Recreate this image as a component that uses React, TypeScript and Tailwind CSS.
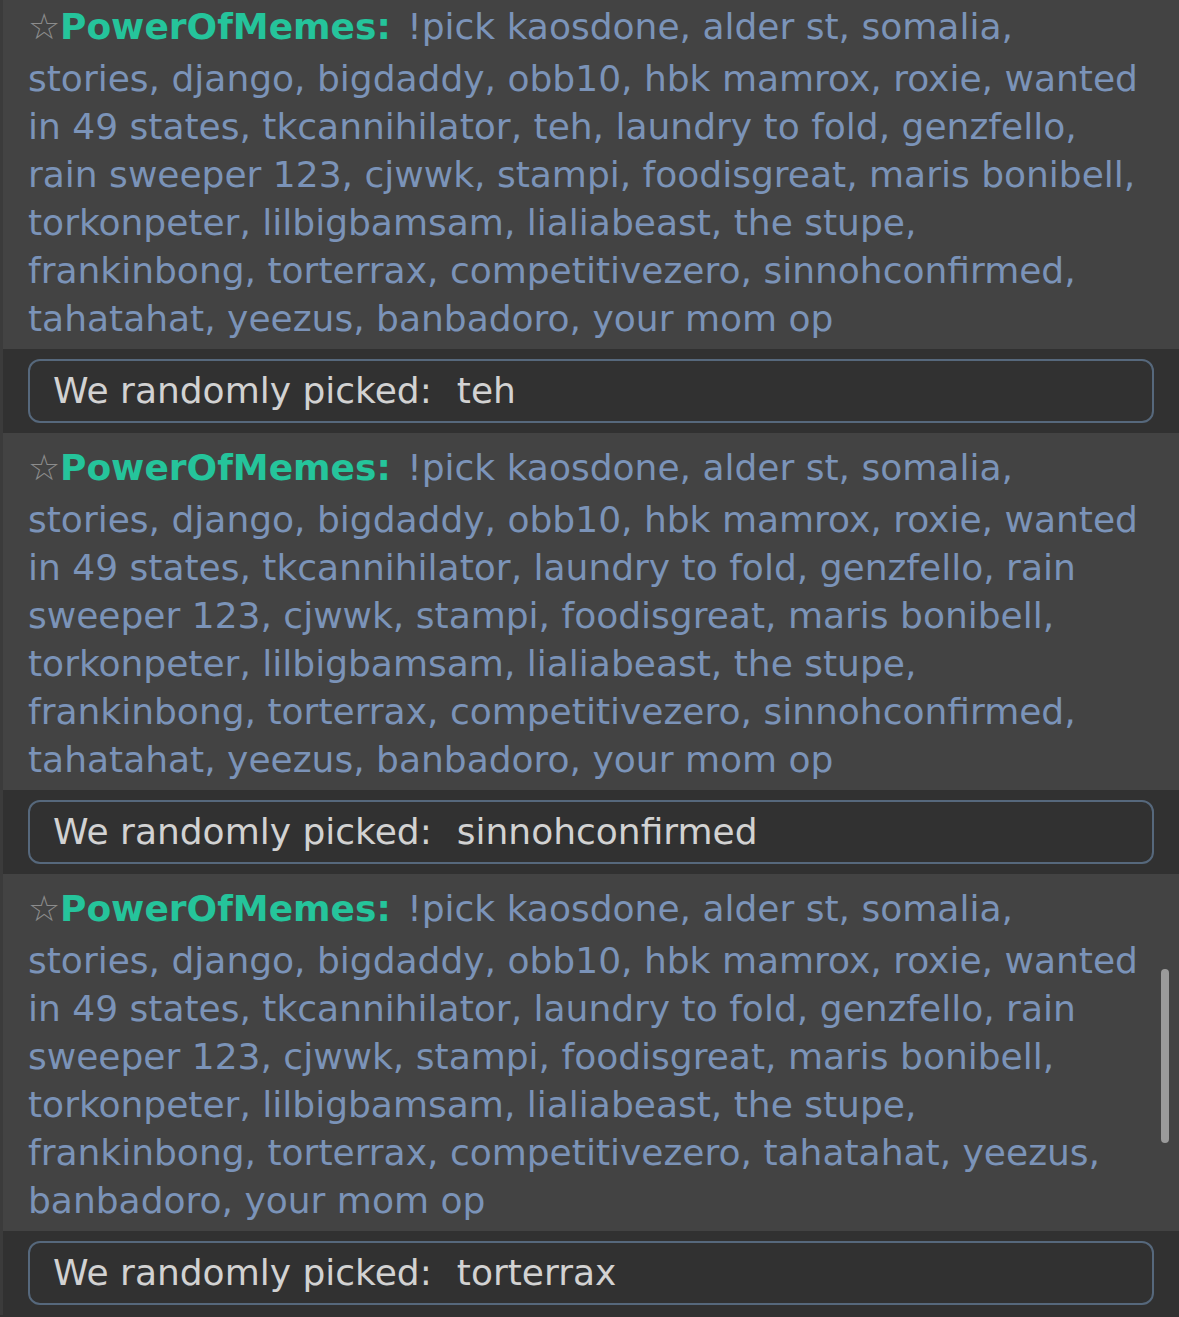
import React from "react";

const head = "!pick kaosdone, alder st, somalia,\nstories, django, bigdaddy, obb10, hbk mamrox, roxie, wanted\n";

const msgs = [
  {
    text:
      head +
      "in 49 states, tkcannihilator, teh, laundry to fold, genzfello,\nrain sweeper 123, cjwwk, stampi, foodisgreat, maris bonibell,\ntorkonpeter, lilbigbamsam, lialiabeast, the stupe,\nfrankinbong, torterrax, competitivezero, sinnohconfirmed,\ntahatahat, yeezus, banbadoro, your mom op",
    pick: "teh",
  },
  {
    text:
      head +
      "in 49 states, tkcannihilator, laundry to fold, genzfello, rain\nsweeper 123, cjwwk, stampi, foodisgreat, maris bonibell,\ntorkonpeter, lilbigbamsam, lialiabeast, the stupe,\nfrankinbong, torterrax, competitivezero, sinnohconfirmed,\ntahatahat, yeezus, banbadoro, your mom op",
    pick: "sinnohconfirmed",
  },
  {
    text:
      head +
      "in 49 states, tkcannihilator, laundry to fold, genzfello, rain\nsweeper 123, cjwwk, stampi, foodisgreat, maris bonibell,\ntorkonpeter, lilbigbamsam, lialiabeast, the stupe,\nfrankinbong, torterrax, competitivezero, tahatahat, yeezus,\nbanbadoro, your mom op",
    pick: "torterrax",
  },
];

export default function App() {
  return (
    <div
      className="relative h-[1317px] w-[1179px] overflow-hidden bg-[#313131]"
      style={{ fontFamily: '"DejaVu Sans", Verdana, sans-serif' }}
    >
      <div className="-mt-[8px] border-l-[3px] border-[#3b3b3b]">
        {msgs.map((m, i) => (
          <div key={i}>
            <div className="h-[357px] bg-[#434343] pb-[6px] pl-[25px] pr-[10px] pt-[7px]">
              <p className="whitespace-pre-line text-[36px] leading-[48px] text-[#7b93b8]">
                <span className="inline-block leading-[56px]">
                  <span className="inline-block w-[32px] text-[#8c8c8c]">☆</span>
                  <span className="font-bold text-[#25c49b]">PowerOfMemes:</span>
                </span>{" "}
                <span className="ml-[5px]">{m.text}</span>
              </p>
            </div>
            <div className="h-[84px] bg-[#313131] px-[25px] py-[10px]">
              <div className="flex h-[64px] items-center whitespace-pre rounded-[12px] border-2 border-[#56687c] pl-[23px] text-[36px] text-[#d2d2d2]">
                <span>We randomly picked:</span>
                <span className="ml-[25px]">{m.pick}</span>
              </div>
            </div>
          </div>
        ))}
      </div>
      <div className="absolute left-[1161px] top-[969px] h-[174px] w-[8px] rounded-full bg-[#9a9a9a]" />
    </div>
  );
}
